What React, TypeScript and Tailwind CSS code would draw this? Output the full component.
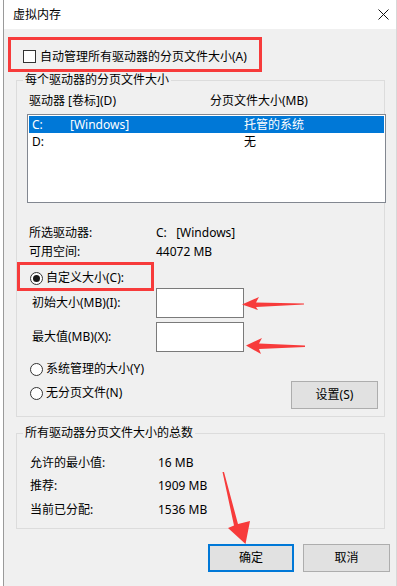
import React from "react";

const Radio = ({ checked }: { checked?: boolean }) => (
  <span className="w-[13px] h-[13px] rounded-full border border-[#333333] bg-white flex items-center justify-center shrink-0">
    {checked ? <span className="w-[7px] h-[7px] rounded-full bg-[#1a1a1a]" /> : null}
  </span>
);

const Btn = ({ label, primary, w }: { label: string; primary?: boolean; w: string }) => (
  <div
    className={
      "h-[28px] flex items-center justify-center bg-[#e1e1e1] text-black " +
      w +
      (primary ? " border-2 border-[#0078d7]" : " border border-[#adadad]")
    }
  >
    {label}
  </div>
);

export default function App() {
  return (
    <div className="relative w-[397px] h-[586px] flex bg-white text-[12px] leading-[16px] text-black font-['Noto_Sans','Noto_Sans_CJK_SC',sans-serif] overflow-hidden">
      <div className="w-[3px] bg-white" />
      <div className="w-px bg-[#9a9a9a]" />
      <div className="flex-1 flex flex-col bg-[#f0f0f0]">
        {/* title bar */}
        <div className="h-[29px] bg-white flex items-center pl-[9px] relative">
          <span>虚拟内存</span>
          <svg className="absolute left-[374px] top-[9px]" width="11" height="11" viewBox="0 0 11 11">
            <path d="M0.5 0.5 L10.5 10.5 M10.5 0.5 L0.5 10.5" stroke="#111" strokeWidth="1" />
          </svg>
        </div>

        {/* auto manage checkbox */}
        <div className="mt-[18px] h-[19px] flex items-center pl-[19px]">
          <span className="w-[13px] h-[13px] border border-[#333333] bg-white shrink-0" />
          <span className="ml-[4px]">自动管理所有驱动器的分页文件大小(A)</span>
        </div>

        {/* group 1 */}
        <div className="relative mt-[14px] ml-[12px] w-[369px] h-[337px] border border-[#dcdcdc] flex flex-col">
          <span className="absolute left-[6px] -top-[9px] px-[2px] bg-[#f0f0f0]">每个驱动器的分页文件大小</span>
          <div className="mt-[12px] h-[16px] flex pl-[12px]">
            <span className="w-[181px]">驱动器 [卷标](D)</span>
            <span>分页文件大小(MB)</span>
          </div>
          <div className="mt-[5px] ml-[10px] w-[359px] h-[89px] border border-[#828790] bg-white p-[1px] flex flex-col">
            <div className="h-[17px] bg-[#0078d7] text-white flex items-center pl-[3px]">
              <span className="w-[38px]">C:</span>
              <span className="w-[174px]">[Windows]</span>
              <span>托管的系统</span>
            </div>
            <div className="h-[17px] flex items-center pl-[3px]">
              <span className="w-[212px]">D:</span>
              <span>无</span>
            </div>
          </div>
          <div className="mt-[22px] h-[16px] flex pl-[12px]">
            <span className="w-[127px]">所选驱动器:</span>
            <span>C:&nbsp;&nbsp;&nbsp;[Windows]</span>
          </div>
          <div className="mt-[3px] h-[16px] flex pl-[12px]">
            <span className="w-[127px]">可用空间:</span>
            <span>44072 MB</span>
          </div>
          <div className="mt-[10px] h-[16px] flex items-center pl-[13px]">
            <Radio checked />
            <span className="ml-[3px]">自定义大小(C):</span>
          </div>
          <div className="mt-[2px] h-[30px] flex items-center pl-[15px]">
            <span className="w-[124px]">初始大小(MB)(I):</span>
            <div className="w-[88px] h-[30px] border border-[#7a7a7a] bg-white" />
          </div>
          <div className="mt-[4px] h-[30px] flex items-center pl-[15px]">
            <span className="w-[124px]">最大值(MB)(X):</span>
            <div className="w-[88px] h-[30px] border border-[#7a7a7a] bg-white" />
          </div>
          <div className="mt-[9px] h-[16px] flex items-center pl-[13px]">
            <Radio />
            <span className="ml-[3px]">系统管理的大小(Y)</span>
          </div>
          <div className="mt-[4px] flex items-start pl-[13px] pr-[6px]">
            <div className="mt-[4px] h-[16px] flex items-center">
              <Radio />
              <span className="ml-[3px]">无分页文件(N)</span>
            </div>
            <div className="ml-auto">
              <Btn label="设置(S)" w="w-[87px]" />
            </div>
          </div>
        </div>

        {/* group 2 */}
        <div className="relative mt-[16px] ml-[12px] w-[369px] h-[96px] border border-[#dcdcdc] flex flex-col">
          <span className="absolute left-[6px] -top-[9px] px-[2px] bg-[#f0f0f0]">所有驱动器分页文件大小的总数</span>
          <div className="mt-[21px] h-[16px] flex pl-[13px]">
            <span className="w-[128px]">允许的最小值:</span>
            <span>16 MB</span>
          </div>
          <div className="mt-[7px] h-[16px] flex pl-[13px]">
            <span className="w-[128px]">推荐:</span>
            <span>1909 MB</span>
          </div>
          <div className="mt-[8px] h-[16px] flex pl-[13px]">
            <span className="w-[128px]">当前已分配:</span>
            <span>1536 MB</span>
          </div>
        </div>

        {/* buttons */}
        <div className="mt-[15px] flex pl-[204px] gap-[9px]">
          <Btn label="确定" primary w="w-[86px]" />
          <Btn label="取消" w="w-[87px]" />
        </div>
      </div>
      <div className="w-px bg-[#d8d8d8]" />

      {/* red annotations */}
      <div className="absolute left-[8px] top-[37px] w-[254px] h-[35px] border-[3px] border-[#f73b3b]" />
      <div className="absolute left-[17px] top-[262px] w-[137px] h-[29px] border-[3px] border-[#f73b3b]" />
      <svg className="absolute left-0 top-0 pointer-events-none" width="397" height="586" viewBox="0 0 397 586">
        <polygon points="242,304.5 259,297 256,302.5 304,303.5 304,304.5 256,307 258,310" fill="#f73b3b" />
        <polygon points="246,345.5 262,338 259,343.5 305,345.5 305,347 259,349 261,354" fill="#f73b3b" />
        <polygon points="222.5,472 224,472 238,524 250,521 245.5,544 228,528 234,525.5" fill="#f73b3b" />
      </svg>
    </div>
  );
}
